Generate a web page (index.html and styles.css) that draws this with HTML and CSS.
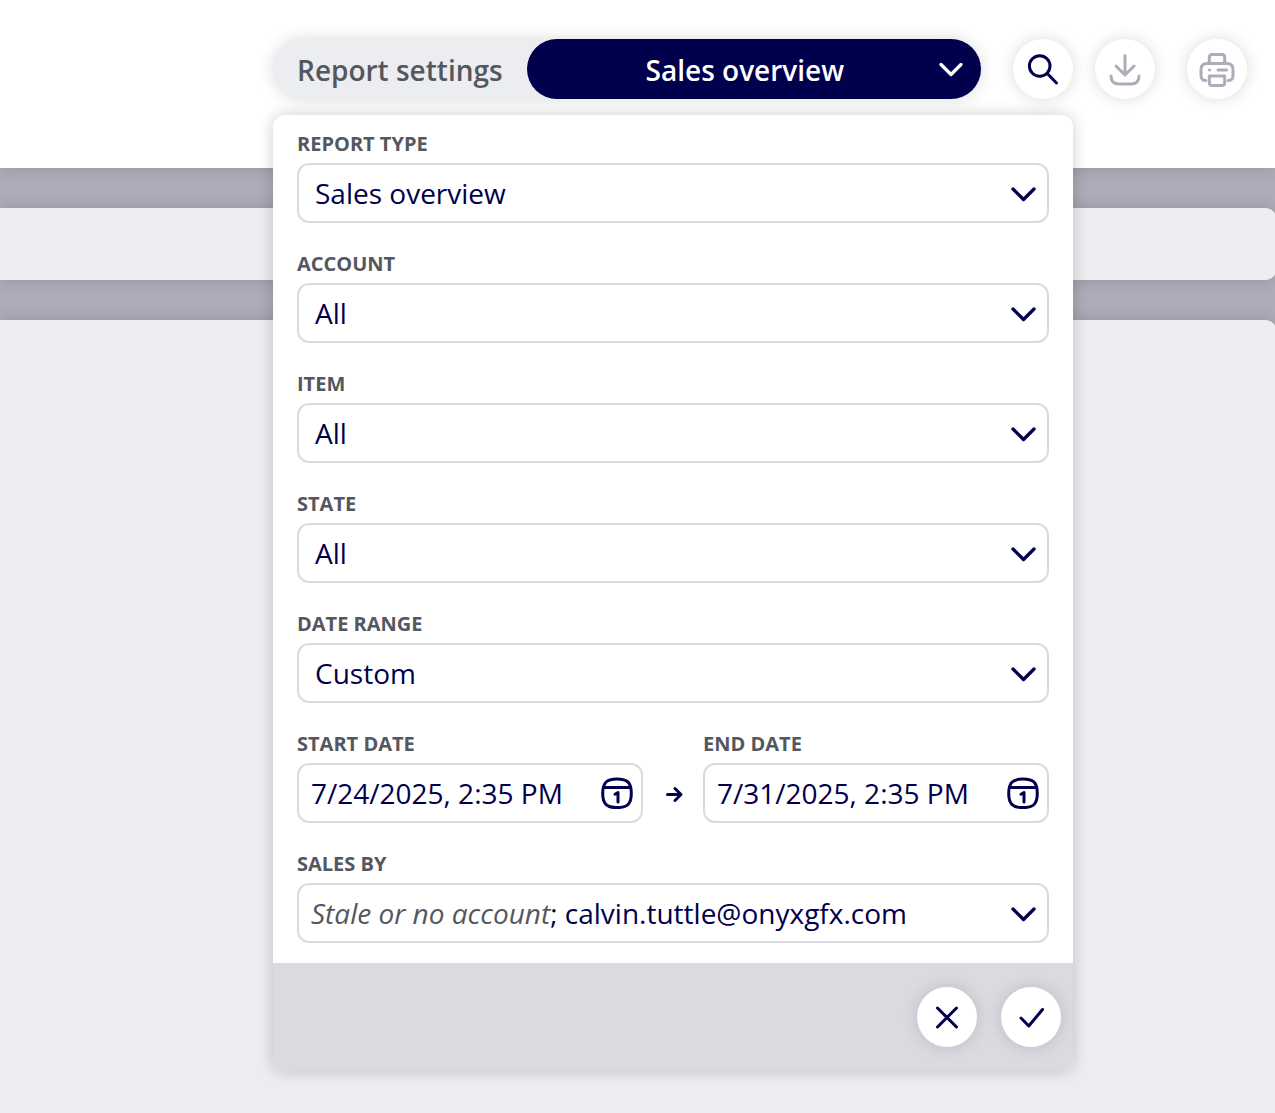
FILE: index.html
```html
<!DOCTYPE html>
<html lang="en">
<head>
<meta charset="UTF-8">
<meta name="viewport" content="width=device-width, initial-scale=1.0">
<title>Sales overview</title>
<link rel="stylesheet" href="styles.css">
</head>
<body>
<svg class="sprite" aria-hidden="true">
    <symbol id="chevron" viewBox="0 0 28 28">
        <path stroke-width="3.300" d="M4 10 14.500 20.500 25 10"/>
    </symbol>
    <symbol id="calendar" viewBox="0 0 32 32">
        <path d="M16 2C26.500 2 30.300 5.500 30.300 16.300S26.500 30.600 16 30.600 1.700 26.800 1.700 16.300 5.500 2 16 2Z"/>
        <path d="M2.500 10.500H29.500M14 17.200 17 15.500V25"/>
    </symbol>
</svg>

<header class="header">
    <div class="report">
        <div class="report-bar">
            <span class="report-label">Report settings</span>
            <button class="report-button" type="button" aria-expanded="true">
                <span class="report-name">Sales overview</span>
                <svg class="icon chevron" viewBox="0 0 28 28"><path stroke-width="3.300" d="M4 9.500 14 19.500 24 9.500"/></svg>
            </button>
        </div>
        <button class="round" type="button" aria-label="Search">
            <svg class="icon" viewBox="0 0 36 36"><circle cx="14.700" cy="15" r="10.300"/><path d="M22.200 22.500 31.500 32"/></svg>
        </button>

        <form class="panel">
            <div class="fields">
                <div class="field">
                    <label for="type">REPORT TYPE</label>
                    <div class="box">
                        <select id="type"><option>Sales overview</option></select>
                        <svg class="icon chevron"><use href="#chevron"/></svg>
                    </div>
                </div>
                <div class="field">
                    <label for="account">ACCOUNT</label>
                    <div class="box">
                        <select id="account"><option>All</option></select>
                        <svg class="icon chevron"><use href="#chevron"/></svg>
                    </div>
                </div>
                <div class="field">
                    <label for="item">ITEM</label>
                    <div class="box">
                        <select id="item"><option>All</option></select>
                        <svg class="icon chevron"><use href="#chevron"/></svg>
                    </div>
                </div>
                <div class="field">
                    <label for="state">STATE</label>
                    <div class="box">
                        <select id="state"><option>All</option></select>
                        <svg class="icon chevron"><use href="#chevron"/></svg>
                    </div>
                </div>
                <div class="field">
                    <label for="range">DATE RANGE</label>
                    <div class="box">
                        <select id="range"><option>Custom</option></select>
                        <svg class="icon chevron"><use href="#chevron"/></svg>
                    </div>
                </div>
                <div class="dates">
                    <div class="field">
                        <label for="start">START DATE</label>
                        <div class="box">
                            <input id="start" type="text" value="7/24/2025, 2:35 PM">
                            <button class="pick" type="button" aria-label="Pick start date">
                                <svg class="icon"><use href="#calendar"/></svg>
                            </button>
                        </div>
                    </div>
                    <svg class="icon arrow" viewBox="0 0 20 20"><path d="M4.500 11.500H18M12 5.500 18 11.500 12 17.500"/></svg>
                    <div class="field">
                        <label for="end">END DATE</label>
                        <div class="box">
                            <input id="end" type="text" value="7/31/2025, 2:35 PM">
                            <button class="pick" type="button" aria-label="Pick end date">
                                <svg class="icon"><use href="#calendar"/></svg>
                            </button>
                        </div>
                    </div>
                </div>
                <div class="field">
                    <label for="sales">SALES BY</label>
                    <div class="box">
                        <button class="multi" id="sales" type="button"><i>Stale or no account</i>; calvin.tuttle@onyxgfx.com</button>
                        <svg class="icon chevron"><use href="#chevron"/></svg>
                    </div>
                </div>
            </div>
            <div class="actions">
                <button class="round" type="button" aria-label="Cancel">
                    <svg class="icon" viewBox="0 0 36 36"><path d="M8.500 9 27.500 28M27.500 9 8.500 28"/></svg>
                </button>
                <button class="round" type="submit" aria-label="Apply">
                    <svg class="icon" viewBox="0 0 36 36"><path d="M8 19 15.800 27 29.500 10.500"/></svg>
                </button>
            </div>
        </form>
    </div>
    <div class="tools">
        <button class="round" type="button" aria-label="Download" disabled>
            <svg class="icon" viewBox="0 0 36 36"><path d="M18 4.500V23M9 15 18 24 27 15M4 25C4 31 7 33 12 33H24C29 33 32 31 32 25"/></svg>
        </button>
        <button class="round" type="button" aria-label="Print" disabled>
            <svg class="icon" viewBox="0 0 36 36"><path d="M10.300 12V6.500Q10.300 3.500 13 3.500H23Q25.700 3.500 25.700 6.500V12M6.800 29.500H6.500Q2 29.500 2 24.500V18.500Q2 12.500 8 12.500H28Q34 12.500 34 18.500V24.500Q34 29.500 29.500 29.500H29.200M19 19H27.500M10.500 19H10.600M10.300 25H25.700V31.700Q25.700 34.600 23 34.600H13Q10.300 34.600 10.300 31.700Z"/></svg>
        </button>
    </div>
</header>

<main class="content">
    <section class="card card-title"></section>
    <section class="card card-body"></section>
</main>
</body>
</html>
```

FILE: styles.css
```css
* {
    box-sizing: border-box;
}
body {
    margin: 0;
    min-height: 100vh;
    display: flex;
    flex-direction: column;
    background-color: #adadb9;
    color: #00004d;
    font-family: "Open Sans", sans-serif;
    font-size: 28px;
    line-height: 40px;
}
button, input, select {
    margin: 0;
    padding: 0;
    border: none;
    background: none;
    color: inherit;
    font: inherit;
}
button {
    cursor: pointer;
}
.sprite {
    display: none;
}
.icon {
    display: block;
    flex: none;
    width: 36px;
    height: 36px;
    overflow: visible;
    fill: none;
    stroke: currentColor;
    stroke-width: 3;
    stroke-linecap: round;
    stroke-linejoin: round;
}
.chevron {
    width: 28px;
    height: 28px;
    pointer-events: none;
}

/* header */
.header {
    position: relative;
    z-index: 1;
    display: flex;
    justify-content: flex-end;
    align-items: flex-start;
    gap: 22px;
    height: 168px;
    padding: 39px 28px 0;
    background-color: white;
    box-shadow: 0 0 16px rgba(0, 0, 0, 0.15);
}
.report {
    position: relative;
    display: flex;
    flex: 0 1 800px;
    gap: 32px;
}
.report-bar {
    display: flex;
    flex: 1;
    height: 60px;
    border-radius: 30px;
    background-color: #ecedf1;
    box-shadow: 0 0 16px rgba(0, 0, 0, 0.15);
}
.report-label {
    padding: 11px 24px;
    color: #54575e;
    font-weight: 600;
    white-space: nowrap;
}
.report-button {
    display: flex;
    flex: 1;
    align-items: center;
    padding: 0 16px;
    border-radius: 30px;
    background-color: #00004d;
    color: white;
    font-weight: 600;
}
.report-name {
    flex: 1;
    padding: 2px 0 0 10px;
}
.tools {
    display: flex;
    gap: 32px;
}
.round {
    display: flex;
    flex: none;
    align-items: center;
    justify-content: center;
    width: 60px;
    height: 60px;
    border-radius: 50%;
    background-color: white;
    box-shadow: 0 0 16px rgba(0, 0, 0, 0.15);
}
.round:disabled {
    color: #adadb9;
    cursor: default;
}

/* settings panel */
.panel {
    position: absolute;
    top: 76px;
    left: 0;
    right: 0;
    border-radius: 12px;
    background-color: white;
    box-shadow: 0 0 16px rgba(0, 0, 0, 0.2);
}
.fields {
    display: grid;
    grid-template-columns: minmax(0, 1fr);
    gap: 28px;
    padding: 16px 24px 20px;
}
.field {
    flex: 1;
    min-width: 0;
}
.field label {
    display: block;
    margin-bottom: 6px;
    color: #54575e;
    font-size: 20px;
    font-weight: 700;
    line-height: 26px;
}
.box {
    display: flex;
    align-items: center;
    height: 60px;
    border: 2px solid #dadbe0;
    border-radius: 12px;
    background-color: white;
}
.box select {
    flex: 1;
    height: 56px;
    margin-right: -38px;
    padding: 0 54px 0 16px;
    appearance: none;
}
.box input {
    flex: 1;
    min-width: 0;
    padding-left: 12px;
}
.multi {
    flex: 1;
    padding-left: 12px;
    overflow: hidden;
    text-align: left;
    white-space: nowrap;
    text-overflow: ellipsis;
}
.multi i {
    color: #54575e;
}
.box .chevron {
    margin-right: 10px;
}
.dates {
    display: flex;
    align-items: flex-end;
    gap: 20px;
}
.pick {
    margin-right: 8px;
}
.pick .icon {
    width: 32px;
    height: 32px;
}
.arrow {
    width: 20px;
    height: 60px;
}
.actions {
    display: flex;
    justify-content: flex-end;
    gap: 24px;
    padding: 24px 12px;
    border-radius: 0 0 12px 12px;
    background-color: #dadbe0;
}

/* page content */
.content {
    display: flex;
    flex: 1;
    flex-direction: column;
    gap: 40px;
    padding-top: 40px;
    overflow: hidden;
}
.card {
    margin-right: -2px;
    background-color: #ecedf1;
    box-shadow: 0 0 16px rgba(0, 0, 0, 0.15);
}
.card-title {
    height: 72px;
    border-radius: 0 12px 12px 0;
}
.card-body {
    flex: 1;
    border-radius: 0 12px 0 0;
}
```
